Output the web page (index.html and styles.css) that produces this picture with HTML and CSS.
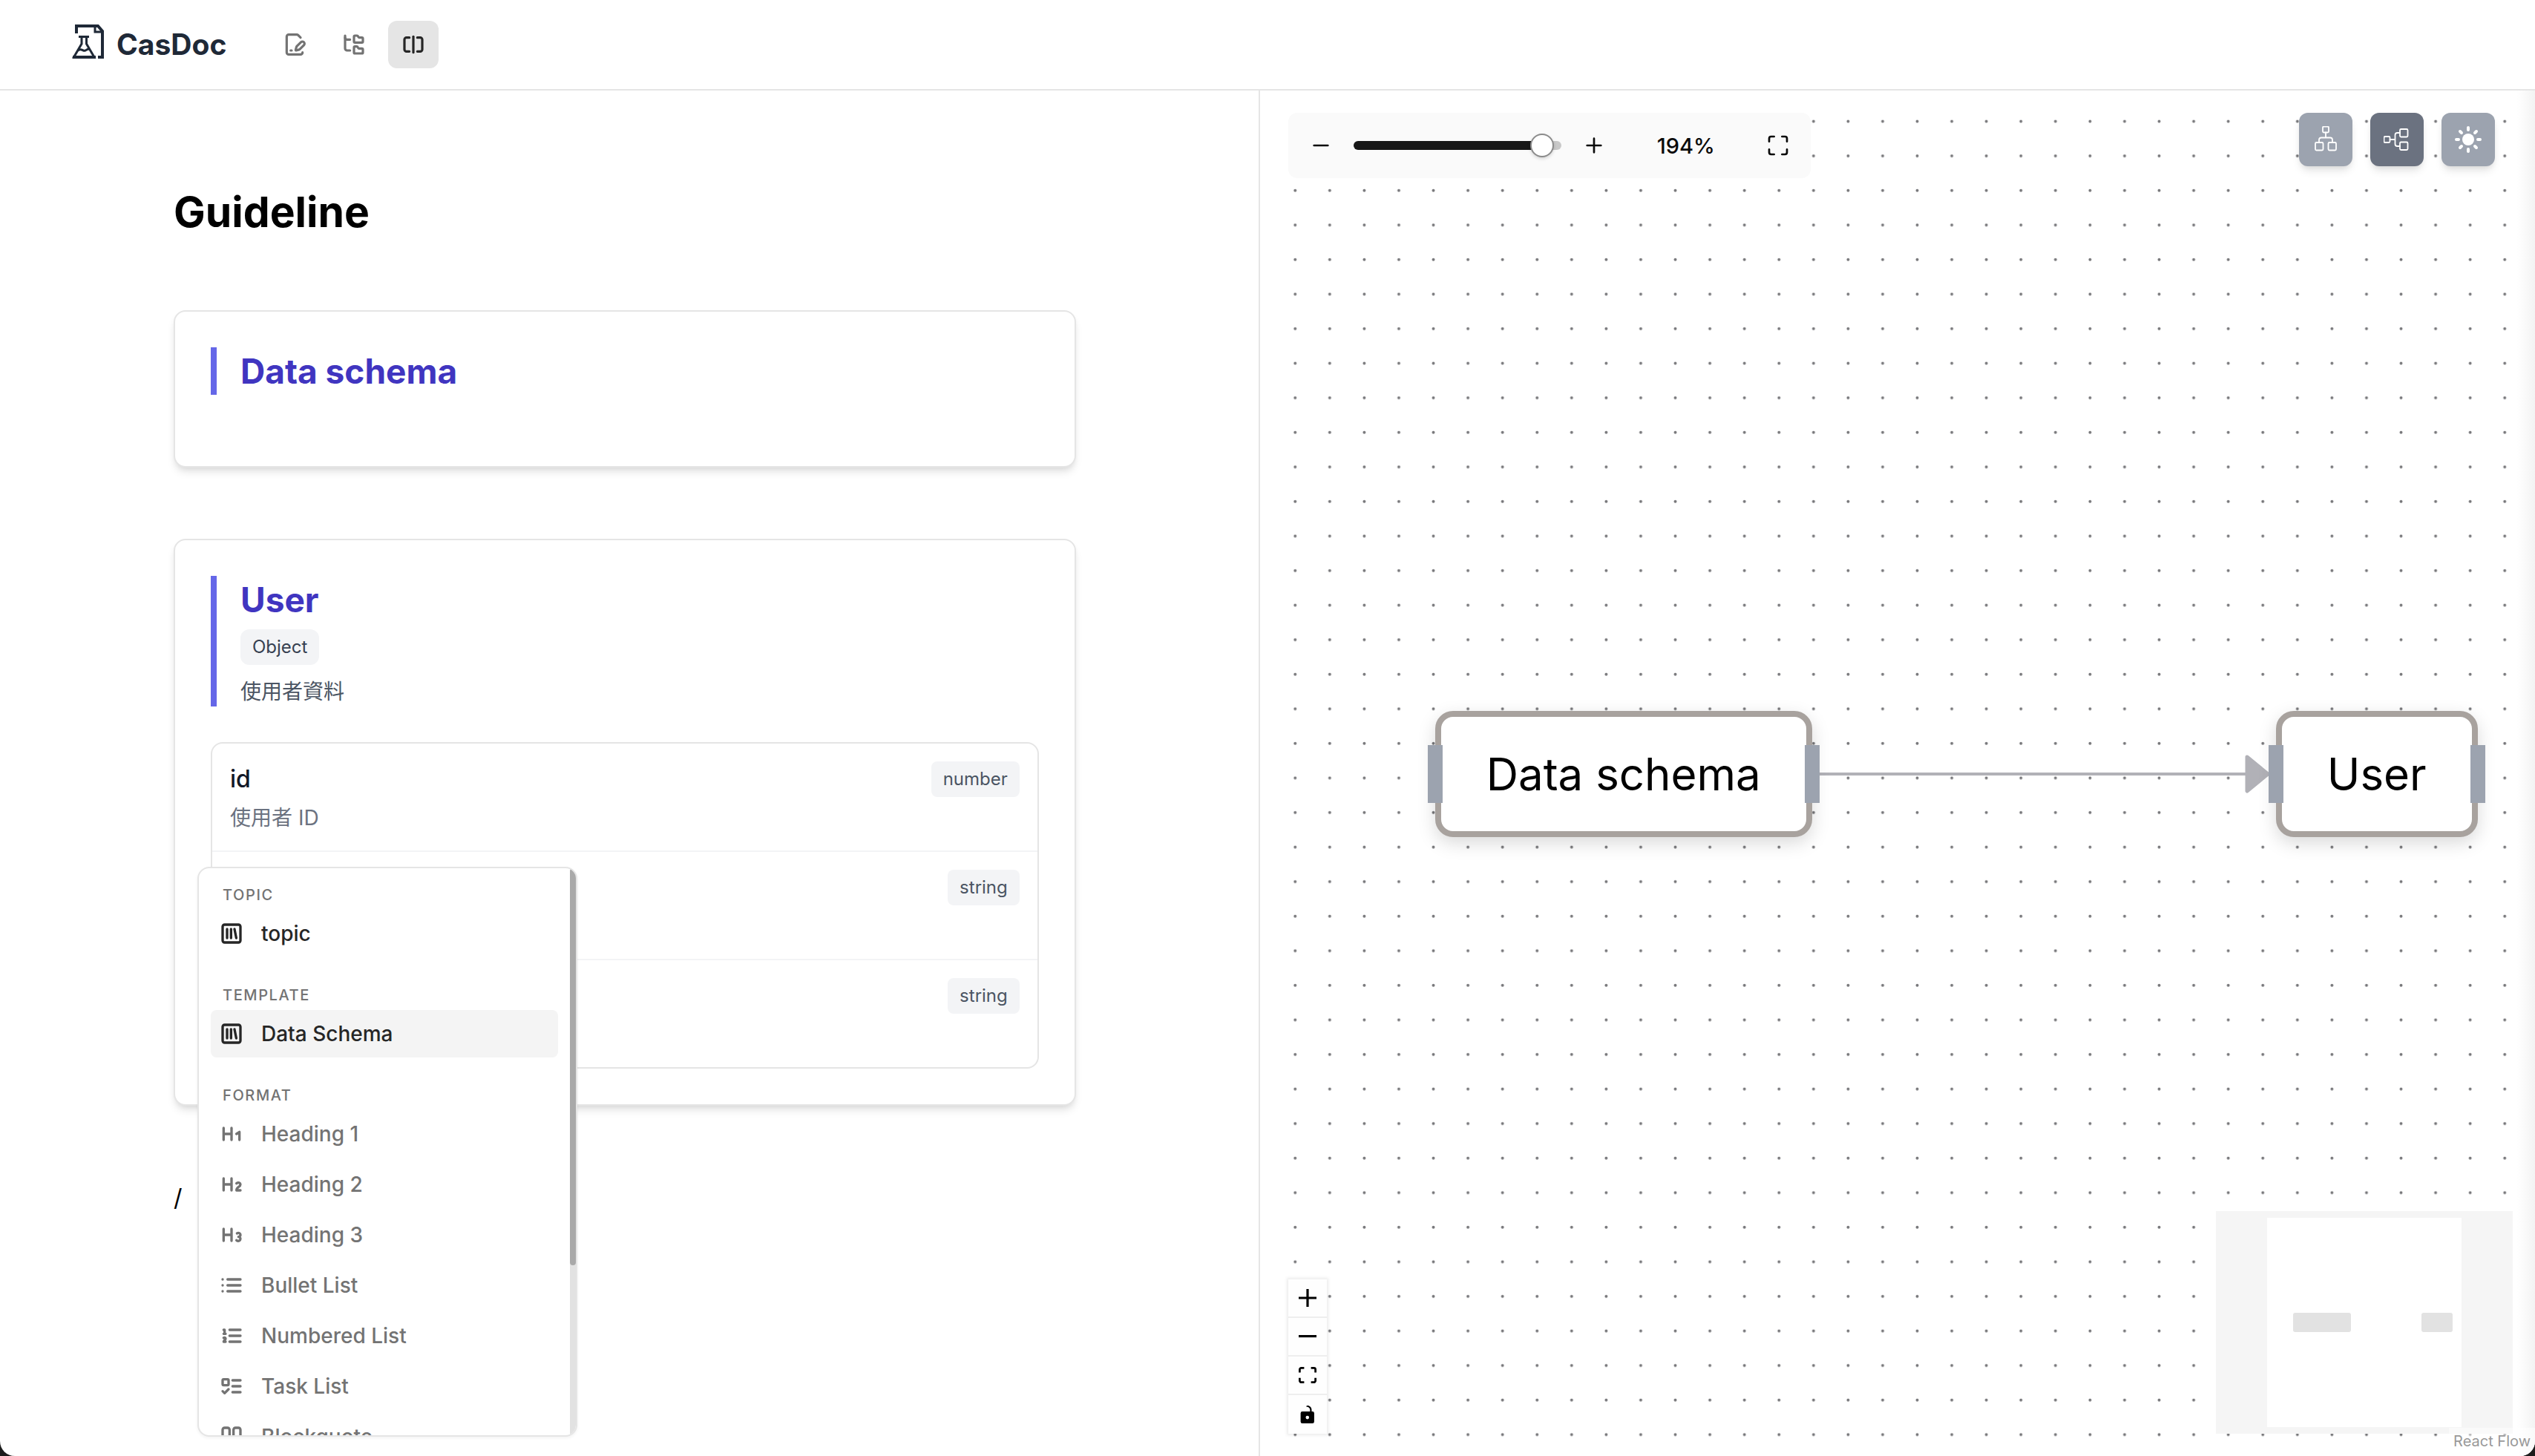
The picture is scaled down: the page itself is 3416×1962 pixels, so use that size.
FILE: index.html
```html
<!DOCTYPE html>
<html lang="zh-Hant">
<head>
<meta charset="utf-8">
<title>CasDoc</title>
<meta name="viewport" content="width=device-width, initial-scale=1">
<link rel="stylesheet" href="styles.css">
</head>
<body>
<div class="app">
  <header class="topbar">
    <a class="brand" href="#">
      <svg class="brand-logo" viewBox="97 31 44 48" fill="none" stroke="currentColor" stroke-width="4" aria-hidden="true">
        <path d="M103 44V34H132L138 41V76H132"/>
        <path stroke-width="3" d="M128 34V42H138"/>
        <path stroke-width="3" d="M106 48.500H120M110 49V58L99.500 76H127L116.500 58V49"/>
        <path d="M98 76H129"/>
        <path stroke-width="3" d="M105 67C110 63 112 69 115 67C117 66 118 65 120 65"/>
      </svg>
      <span>CasDoc</span>
    </a>
    <nav class="views" aria-label="View">
      <button class="view-button" type="button" aria-label="Edit">
        <svg class="icon" viewBox="0 0 24 24"><path d="m18 5-2.414-2.414A2 2 0 0 0 14.172 2H6a2 2 0 0 0-2 2v16a2 2 0 0 0 2 2h12a2 2 0 0 0 2-2"/><path d="M21.378 12.626a1 1 0 0 0-3.004-3.004l-4.01 4.012a2 2 0 0 0-.506.854l-.837 2.87a.5.5 0 0 0 .62.62l2.87-.837a2 2 0 0 0 .854-.506z"/><path d="M8 18h1"/></svg>
      </button>
      <button class="view-button" type="button" aria-label="Tree">
        <svg class="icon" viewBox="0 0 24 24"><path d="M20 10a1 1 0 0 0 1-1V6a1 1 0 0 0-1-1h-2.5a1 1 0 0 1-.8-.4l-.9-1.2A1 1 0 0 0 15 3h-2a1 1 0 0 0-1 1v5a1 1 0 0 0 1 1Z"/><path d="M20 21a1 1 0 0 0 1-1v-3a1 1 0 0 0-1-1h-2.9a1 1 0 0 1-.88-.55l-.42-.85a1 1 0 0 0-.92-.6H13a1 1 0 0 0-1 1v5a1 1 0 0 0 1 1Z"/><path d="M3 5a2 2 0 0 0 2 2h3"/><path d="M3 3v13a2 2 0 0 0 2 2h3"/></svg>
      </button>
      <button class="view-button is-active" type="button" aria-label="Split" aria-pressed="true">
        <svg class="icon" viewBox="0 0 24 24"><path d="M8 19H5c-1 0-2-1-2-2V7c0-1 1-2 2-2h3"/><path d="M16 5h3c1 0 2 1 2 2v10c0 1-1 2-2 2h-3"/><path d="M12 4v16"/></svg>
      </button>
    </nav>
  </header>

  <main class="workspace">
    <section class="editor" aria-label="Document">
      <article class="document">
        <h1 class="doc-title">Guideline</h1>

        <section class="card card-empty">
          <div class="card-head"><h2 class="card-title">Data schema</h2></div>
        </section>

        <section class="card">
          <div class="card-head">
            <h2 class="card-title">User</h2>
            <span class="tag tag-kind">Object</span>
            <p class="card-note">使用者資料</p>
          </div>
          <ul class="fields">
            <li class="field">
              <div><h3 class="field-name">id</h3><p class="field-note">使用者 ID</p></div>
              <span class="tag">number</span>
            </li>
            <li class="field"><span class="tag">string</span></li>
            <li class="field"><span class="tag">string</span></li>
          </ul>
        </section>

        <p class="paragraph">/</p>
      </article>

      <div class="slash-menu">
        <div class="menu-list">
          <div class="menu-group">
            <h4 class="menu-label">TOPIC</h4>
            <button class="menu-item is-strong" type="button">
              <svg class="icon icon-bold" viewBox="0 0 24 24"><rect width="18" height="18" x="3" y="3" rx="2"/><path d="M7.500 7.500v9M11.500 7.500v9M15 7.500l1.800 9"/></svg>
              topic
            </button>
          </div>
          <div class="menu-group">
            <h4 class="menu-label">TEMPLATE</h4>
            <button class="menu-item is-strong is-selected" type="button">
              <svg class="icon icon-bold" viewBox="0 0 24 24"><rect width="18" height="18" x="3" y="3" rx="2"/><path d="M7.500 7.500v9M11.500 7.500v9M15 7.500l1.800 9"/></svg>
              Data Schema
            </button>
          </div>
          <div class="menu-group">
            <h4 class="menu-label">FORMAT</h4>
            <button class="menu-item" type="button">
              <svg class="icon icon-bold" viewBox="0 0 24 24"><path d="M4 12h8M4 18V6M12 18V6M17 12l3-2v8"/></svg>
              Heading 1
            </button>
            <button class="menu-item" type="button">
              <svg class="icon icon-bold" viewBox="0 0 24 24"><path d="M4 12h8M4 18V6M12 18V6M21 18h-4c0-4 4-3 4-6 0-1.500-2-2.500-4-1"/></svg>
              Heading 2
            </button>
            <button class="menu-item" type="button">
              <svg class="icon icon-bold" viewBox="0 0 24 24"><path d="M4 12h8M4 18V6M12 18V6M17.500 10.500c1.700-1 3.500 0 3.500 1.500a2 2 0 0 1-2 2M17 17.500c2 1.500 4 .3 4-1.500a2 2 0 0 0-2-2"/></svg>
              Heading 3
            </button>
            <button class="menu-item" type="button">
              <svg class="icon icon-bold" viewBox="0 0 24 24"><path d="M3 6h.01M3 12h.01M3 18h.01M8 6h13M8 12h13M8 18h13"/></svg>
              Bullet List
            </button>
            <button class="menu-item" type="button">
              <svg class="icon icon-bold" viewBox="0 0 24 24"><path d="M10 6h11M10 12h11M10 18h11M4 6h1v4M4 10h2M6 18H4c0-1 2-2 2-3s-1-1.500-2-1"/></svg>
              Numbered List
            </button>
            <button class="menu-item" type="button">
              <svg class="icon icon-bold" viewBox="0 0 24 24"><rect x="3" y="5" width="6" height="6" rx="1"/><path d="m3 17 2 2 4-4M13 6h8M13 12h8M13 18h8"/></svg>
              Task List
            </button>
            <button class="menu-item" type="button">
              <svg class="icon icon-bold" viewBox="0 0 24 24"><path d="M16 3a2 2 0 0 0-2 2v6a2 2 0 0 0 2 2 1 1 0 0 1 1 1v1a2 2 0 0 1-2 2 1 1 0 0 0-1 1v2a1 1 0 0 0 1 1 6 6 0 0 0 6-6V5a2 2 0 0 0-2-2z"/><path d="M5 3a2 2 0 0 0-2 2v6a2 2 0 0 0 2 2 1 1 0 0 1 1 1v1a2 2 0 0 1-2 2 1 1 0 0 0-1 1v2a1 1 0 0 0 1 1 6 6 0 0 0 6-6V5a2 2 0 0 0-2-2z"/></svg>
              Blockquote
            </button>
          </div>
        </div>
        <div class="menu-scroll"><div class="menu-thumb"></div></div>
      </div>
    </section>

    <section class="canvas" aria-label="Diagram">
      <div class="canvas-field">
        <svg class="canvas-dots" aria-hidden="true">
          <pattern id="dots" x="-14" y="18" width="46.57" height="46.57" patternUnits="userSpaceOnUse">
            <circle cx="23.28" cy="23.6" r="2" fill="#77777a"/>
          </pattern>
          <rect width="100%" height="100%" fill="url(#dots)"/>
        </svg>
      </div>

      <svg class="canvas-edges" aria-hidden="true">
        <path d="M754 921H1340" fill="none" stroke="#b1b1b7" stroke-width="4"/>
        <path d="M1330 898L1358 921L1330 944Z" fill="#b1b1b7" stroke="#b1b1b7" stroke-width="5" stroke-linejoin="round"/>
      </svg>
      <div class="node node-schema">Data schema</div>
      <div class="node node-user">User</div>

      <div class="zoombar">
        <button class="tool" type="button" aria-label="Zoom out"><svg class="icon" viewBox="0 0 24 24"><path d="M5 12h14"/></svg></button>
        <input class="zoom-range" type="range" min="0" max="200" value="192" aria-label="Zoom">
        <button class="tool" type="button" aria-label="Zoom in"><svg class="icon" viewBox="0 0 24 24"><path d="M5 12h14M12 5v14"/></svg></button>
        <button class="tool tool-value" type="button">194%</button>
        <button class="tool" type="button" aria-label="Fit view"><svg class="icon" viewBox="0 0 24 24"><path d="M8 3H5a2 2 0 0 0-2 2v3M21 8V5a2 2 0 0 0-2-2h-3M3 16v3a2 2 0 0 0 2 2h3M16 21h3a2 2 0 0 0 2-2v-3"/></svg></button>
      </div>

      <div class="layouts">
        <button class="layout-button" type="button" aria-label="Vertical layout">
          <svg class="layout-icon" viewBox="18 18 36 36"><rect x="32" y="18.500" width="8" height="8" rx="1.500"/><rect x="22" y="40" width="10.500" height="10.500" rx="1.500"/><rect x="39.500" y="40" width="10.500" height="10.500" rx="1.500"/><path d="M36 26.500V33.500M27 40V36.500a3 3 0 0 1 3-3H42a3 3 0 0 1 3 3V40"/></svg>
        </button>
        <button class="layout-button is-active" type="button" aria-label="Horizontal layout" aria-pressed="true">
          <svg class="layout-icon" viewBox="18 18 36 36"><rect x="18.500" y="32" width="8" height="8" rx="1.500"/><rect x="40" y="22" width="10.500" height="10.500" rx="1.500"/><rect x="40" y="39.500" width="10.500" height="10.500" rx="1.500"/><path d="M26.500 36H33.500M40 27H36.500a3 3 0 0 0-3 3V42a3 3 0 0 0 3 3H40"/></svg>
        </button>
        <button class="layout-button" type="button" aria-label="Theme">
          <svg class="layout-icon" viewBox="18 18 36 36"><circle cx="36" cy="36" r="8" fill="#fff" stroke="none"/><path stroke-width="4" d="M36 20V23M36 49V52M20 36H23M49 36H52M25 25L27 27M45 45L47 47M47 25L45 27M27 45L25 47"/></svg>
        </button>
      </div>

      <div class="controls">
        <button class="control" type="button" aria-label="Zoom in"><svg viewBox="0 0 32 32"><path d="M32 18.133H18.133V32h-4.266V18.133H0v-4.266h13.867V0h4.266v13.867H32z"/></svg></button>
        <button class="control" type="button" aria-label="Zoom out"><svg viewBox="0 0 32 5"><path d="M0 0h32v4.200H0z"/></svg></button>
        <button class="control" type="button" aria-label="Fit view"><svg viewBox="0 0 32 30"><path d="M3.692 4.630c0-.53.4-.938.939-.938h5.215V0H4.708C2.130 0 0 2.054 0 4.630v5.216h3.692V4.631zM27.354 0h-5.200v3.692h5.170c.53 0 .984.4.984.939v5.215H32V4.631A4.624 4.624 0 0027.354 0zm.954 24.830c0 .532-.4.940-.939.940h-5.215v3.768h5.215c2.577 0 4.631-2.130 4.631-4.707v-5.139h-3.692v5.139zm-23.677.94c-.531 0-.939-.4-.939-.94v-5.138H0v5.139c0 2.577 2.130 4.707 4.708 4.707h5.138V25.770H4.631z"/></svg></button>
        <button class="control" type="button" aria-label="Toggle lock"><svg viewBox="0 0 25 32"><path d="M21.333 10.667H19.810V7.619C19.810 3.429 16.380 0 12.190 0c-4.114 1.828-1.370 2.133.305 2.438 1.676.305 4.420 2.590 4.420 5.181v3.048H3.047A3.056 3.056 0 000 13.714v15.238A3.056 3.056 0 003.048 32h18.285a3.056 3.056 0 003.048-3.048V13.714a3.056 3.056 0 00-3.048-3.047zM12.190 24.533a3.056 3.056 0 01-3.047-3.047 3.056 3.056 0 013.047-3.048 3.056 3.056 0 013.048 3.048 3.056 3.056 0 01-3.048 3.047z"/></svg></button>
      </div>

      <svg class="minimap" viewBox="0 0 400 300" role="img" aria-label="Mini map">
        <rect width="400" height="300" fill="#f5f5f5"/>
        <rect x="69" y="9" width="262" height="282" fill="#fff"/>
        <rect x="104" y="137" width="78" height="26" rx="3" fill="#e2e2e2"/>
        <rect x="277" y="137" width="42" height="26" rx="3" fill="#e2e2e2"/>
      </svg>
      <a class="attribution" href="#">React Flow</a>
    </section>
  </main>
</div>
</body>
</html>
```

FILE: styles.css
```css
*,
*::before,
*::after {
  box-sizing: border-box;
}

body {
  margin: 0;
  background: #1c1c1c;
  color: #000;
  font-family: Inter, "Noto Sans CJK TC", sans-serif;
}

h1, h2, h3, h4, p, ul {
  margin: 0;
  padding: 0;
}

ul {
  list-style: none;
}

button {
  border: 0;
  padding: 0;
  background: none;
  color: inherit;
  font: inherit;
}

.app {
  display: flex;
  flex-direction: column;
  height: 100vh;
  overflow: hidden;
  background: #fff;
  border-radius: 0 0 20px 20px;
}

.icon {
  flex: none;
  width: 32px;
  height: 32px;
  fill: none;
  stroke: currentColor;
  stroke-width: 2;
  stroke-linecap: round;
  stroke-linejoin: round;
}

.icon-bold {
  stroke-width: 2.5;
}

/* Top bar */
.topbar {
  flex: none;
  display: flex;
  align-items: center;
  gap: 58px;
  height: 122px;
  padding: 0 97px;
  border-bottom: 2px solid #e5e5e5;
}

.brand {
  display: flex;
  align-items: center;
  gap: 16px;
  color: #1f2937;
  font-size: 39px;
  font-weight: 700;
  line-height: 48px;
  text-decoration: none;
}

.brand-logo {
  width: 44px;
  height: 48px;
  margin-bottom: 8px;
}

.views {
  display: flex;
  gap: 12px;
}

.view-button {
  display: grid;
  place-items: center;
  width: 68px;
  height: 64px;
  border-radius: 12px;
  color: #737373;
}

.view-button .icon {
  stroke-width: 2.4;
}

.view-button.is-active {
  background: #e5e5e5;
  color: #262626;
}

/* Split workspace */
.workspace {
  flex: 1;
  display: flex;
  min-height: 0;
}

.editor {
  position: relative;
  flex: 0 0 49.7%;
  overflow: hidden;
  border-right: 2px solid #e5e5e5;
}

.document {
  display: flex;
  flex-direction: column;
  gap: 96px;
  padding: 128px 246px 0 234px;
}

.doc-title {
  font-size: 57px;
  font-weight: 700;
  line-height: 72px;
}

.card {
  padding: 48px;
  border: 2px solid #e5e5e5;
  border-radius: 16px;
  background: #fff;
  box-shadow: 0 8px 12px -2px rgba(0, 0, 0, 0.1), 0 4px 8px -4px rgba(0, 0, 0, 0.1);
}

.card-empty {
  padding-bottom: 96px;
}

.card-head {
  display: flex;
  flex-direction: column;
  align-items: flex-start;
  padding-left: 32px;
  border-left: 8px solid #6567e8;
}

.card-title {
  color: #4035c0;
  font-size: 46px;
  font-weight: 700;
  line-height: 64px;
}

.card-note {
  margin-top: 16px;
  color: #4b5563;
  font-size: 28px;
  line-height: 40px;
}

.tag {
  padding: 0 16px;
  border-radius: 8px;
  background: #f3f4f6;
  color: #4b5563;
  font-size: 24px;
  line-height: 48px;
}

.tag-kind {
  margin-top: 8px;
  border-radius: 12px;
  color: #374151;
}

.fields {
  margin-top: 48px;
  border: 2px solid #e5e5e5;
  border-radius: 16px;
}

.field {
  display: flex;
  align-items: flex-start;
  min-height: 144px;
  padding: 24px;
}

.field + .field {
  border-top: 2px solid #f3f4f6;
  min-height: 146px;
}

.field .tag {
  margin-left: auto;
}

.field-name {
  color: #111827;
  font-size: 32px;
  font-weight: 500;
  line-height: 48px;
}

.field-note {
  margin-top: 8px;
  color: #6b7280;
  font-size: 28px;
  line-height: 40px;
}

.paragraph {
  font-size: 32px;
  line-height: 56px;
}

/* Slash command menu */
.slash-menu {
  position: absolute;
  left: 266px;
  bottom: 26px;
  display: flex;
  width: 512px;
  height: 768px;
  overflow: hidden;
  border: 2px solid #e5e5e5;
  border-radius: 16px;
  background: #fff;
  box-shadow: 0 2px 4px rgba(0, 0, 0, 0.05);
}

.menu-list {
  flex: 1;
  display: flex;
  flex-direction: column;
  gap: 35px;
  padding: 20px 16px;
}

.menu-group {
  display: flex;
  flex-direction: column;
  gap: 4px;
}

.menu-label {
  padding-left: 16px;
  color: #737373;
  font-size: 20px;
  font-weight: 500;
  letter-spacing: 0.08em;
  line-height: 32px;
}

.menu-item {
  flex: none;
  display: flex;
  align-items: center;
  gap: 24px;
  height: 64px;
  padding: 0 12px;
  border-radius: 8px;
  color: #737373;
  font-size: 28px;
  font-weight: 500;
  text-align: left;
}

.menu-item.is-strong {
  color: #262626;
}

.menu-item.is-selected {
  background: #f4f4f4;
}

.menu-scroll {
  flex: none;
  width: 8px;
  background: #e2e2e2;
}

.menu-thumb {
  height: 70%;
  border-radius: 4px;
  background: #a9a9a9;
}

/* Diagram canvas */
.canvas {
  position: relative;
  flex: 1;
  overflow: hidden;
  background: linear-gradient(to left, #f3f3f3, #fff 24px);
}

.canvas-field {
  height: 100%;
  padding-left: 38px;
}

.canvas-dots {
  display: block;
  width: 100%;
  height: 100%;
}

.canvas-edges {
  position: absolute;
  inset: 0;
  width: 100%;
  height: 100%;
}

.node {
  position: absolute;
  top: 836px;
  display: grid;
  place-items: center;
  height: 170px;
  border: 8px solid #a8a29e;
  border-radius: 24px;
  background: #fff;
  box-shadow: 0 8px 24px rgba(0, 0, 0, 0.15);
  font-size: 60px;
}

.node-schema {
  left: 236px;
  width: 508px;
}

.node-user {
  left: 1369px;
  width: 272px;
}

.node::before,
.node::after {
  content: "";
  position: absolute;
  top: 38px;
  width: 20px;
  height: 78px;
  background: #9ca3af;
}

.node::before {
  left: -18px;
}

.node::after {
  right: -18px;
}

.zoombar {
  position: absolute;
  top: 30px;
  left: 38px;
  display: flex;
  align-items: center;
  gap: 8px;
  padding: 8px;
  border-radius: 12px;
  background: #fafafa;
}

.tool {
  display: grid;
  place-items: center;
  width: 72px;
  height: 72px;
  color: #0a0a0a;
}

.tool-value {
  width: 160px;
  font-size: 29px;
  font-weight: 500;
}

.zoom-range {
  appearance: none;
  width: 280px;
  height: 32px;
  margin: 0;
  background: transparent;
}

.zoom-range::-webkit-slider-runnable-track {
  height: 12px;
  border-radius: 6px;
  background: linear-gradient(to right, #171717 90%, #c8c8c8 90%);
}

.zoom-range::-webkit-slider-thumb {
  appearance: none;
  width: 32px;
  height: 32px;
  margin-top: -10px;
  border: 2px solid #8b8b8b;
  border-radius: 50%;
  background: #fff;
  box-shadow: 0 2px 4px rgba(0, 0, 0, 0.15);
}

.layouts {
  position: absolute;
  top: 30px;
  right: 54px;
  display: flex;
  gap: 24px;
}

.layout-button {
  display: grid;
  place-items: center;
  width: 72px;
  height: 72px;
  border-radius: 12px;
  background: #9ca3af;
  box-shadow: 0 8px 12px -2px rgba(0, 0, 0, 0.1), 0 4px 8px -4px rgba(0, 0, 0, 0.1);
}

.layout-button.is-active {
  background: #6b7280;
}

.layout-icon {
  width: 36px;
  height: 36px;
  fill: none;
  stroke: #fff;
  stroke-width: 1.8;
  stroke-linecap: round;
}

.controls {
  position: absolute;
  left: 38px;
  bottom: 30px;
  width: 52px;
  box-shadow: 0 0 4px 2px rgba(0, 0, 0, 0.08);
}

.control {
  display: grid;
  place-items: center;
  width: 52px;
  height: 52px;
  border-bottom: 2px solid #eee;
  background: #fefefe;
}

.control:last-child {
  border-bottom: 0;
}

.control svg {
  width: 24px;
  max-height: 24px;
}

.minimap {
  position: absolute;
  right: 30px;
  bottom: 30px;
  width: 400px;
  height: 300px;
}

.attribution {
  position: absolute;
  right: 0;
  bottom: 0;
  padding: 4px 6px 6px;
  background: rgba(255, 255, 255, 0.5);
  color: #999;
  font-size: 20px;
  line-height: 28px;
  text-decoration: none;
}
```
